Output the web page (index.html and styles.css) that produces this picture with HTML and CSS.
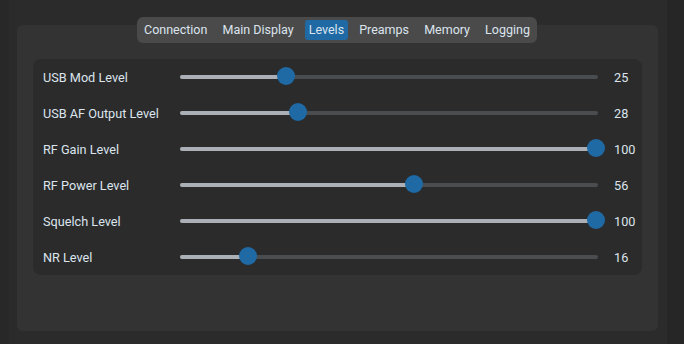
FILE: index.html
```html
<!DOCTYPE html>
<html>
<head>
<meta charset="utf-8">
<link rel="stylesheet" href="styles.css">
</head>
<body>
<div class="window">
  <div class="edge-left"></div>
  <div class="scroll">
    <div class="tabview">
      <div class="tabbar">
        <span class="tab">Connection</span>
        <span class="tab">Main Display</span>
        <span class="tab active">Levels</span>
        <span class="tab">Preamps</span>
        <span class="tab">Memory</span>
        <span class="tab">Logging</span>
      </div>
      <div class="panel">
        <div class="card">
          <div class="row"><span class="label">USB Mod Level</span><div class="slider"><div class="fill" style="width: 105.5px"></div><div class="knob" style="left: 97.5px"></div></div><span class="value">25</span></div>
          <div class="row"><span class="label">USB AF Output Level</span><div class="slider"><div class="fill" style="width: 117.9px"></div><div class="knob" style="left: 109.9px"></div></div><span class="value">28</span></div>
          <div class="row"><span class="label">RF Gain Level</span><div class="slider"><div class="fill" style="width: 416px"></div><div class="knob" style="left: 408px"></div></div><span class="value">100</span></div>
          <div class="row"><span class="label">RF Power Level</span><div class="slider"><div class="fill" style="width: 233.8px"></div><div class="knob" style="left: 225.8px"></div></div><span class="value">56</span></div>
          <div class="row"><span class="label">Squelch Level</span><div class="slider"><div class="fill" style="width: 416px"></div><div class="knob" style="left: 408px"></div></div><span class="value">100</span></div>
          <div class="row"><span class="label">NR Level</span><div class="slider"><div class="fill" style="width: 68.2px"></div><div class="knob" style="left: 60.2px"></div></div><span class="value">16</span></div>
        </div>
      </div>
    </div>
  </div>
  <div class="edge-right"></div>
</div>
</body>
</html>
```

FILE: styles.css
```css
* { box-sizing: border-box; }
html, body {
  margin: 0;
  padding: 0;
  background: #262626;
  font-family: Roboto, "Liberation Sans", sans-serif;
  font-size: 12.7px;
  color: #dce4ee;
}
.window {
  display: flex;
  width: 684px;
  height: 344px;
}
.edge-left {
  width: 9px;
  background: #282828;
}
.scroll {
  width: 658px;
  background: #2b2b2b;
  padding: 17px 0 0 8px;
}
.edge-right {
  flex: 1;
  background: #262626;
}
.tabview {
  position: relative;
  width: 641px;
  height: 314px;
}
.tabbar {
  position: absolute;
  top: 0;
  left: 120px;
  width: 400px;
  height: 26px;
  background: #4a4a4a;
  border-radius: 6px;
  padding: 3px;
  display: flex;
  justify-content: space-between;
  align-items: center;
  z-index: 1;
}
.tab {
  font-size: 12.5px;
  padding: 0 4px;
  height: 20px;
  line-height: 20px;
  border-radius: 3px;
  white-space: nowrap;
  color: #dce4ee;
}
.tab.active {
  background: #1f6aa5;
}
.panel {
  position: absolute;
  top: 8px;
  left: 0;
  width: 641px;
  height: 306px;
  background: #333333;
  border-radius: 6px;
  padding: 34px 16px 0 16px;
}
.card {
  background: #2b2b2b;
  border-radius: 8px;
  height: 216px;
  padding: 0 0 0 10px;
  display: flex;
  flex-direction: column;
}
.row {
  height: 36px;
  display: flex;
  align-items: center;
}
.label {
  width: 137px;
  white-space: nowrap;
}
.slider {
  position: relative;
  width: 418px;
  height: 4px;
  background: #4a4d50;
  border-radius: 2px;
}
.fill {
  position: absolute;
  left: 0;
  top: 0;
  height: 4px;
  background: #aab0b5;
  border-radius: 2px;
}
.knob {
  position: absolute;
  top: -8px;
  width: 18px;
  height: 18px;
  margin-left: -1px;
  border-radius: 50%;
  background: #1f6aa5;
}
.value {
  margin-left: 16px;
}
```
